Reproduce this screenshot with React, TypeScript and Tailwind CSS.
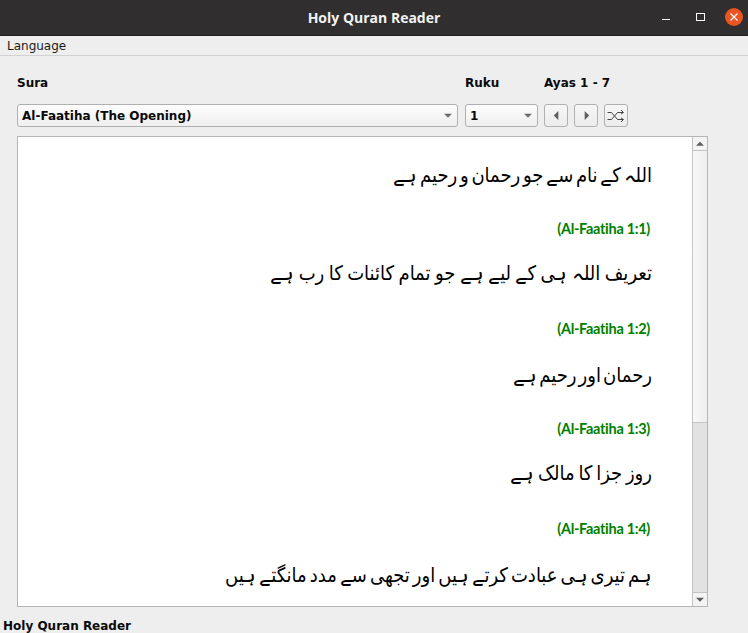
import React from "react";

const dv = "font-['DejaVu_Sans',sans-serif]";

function Arrow({ dir, size = 8, color = "#5e5e5e" }: { dir: "up" | "down" | "left" | "right"; size?: number; color?: string }) {
  const pts = { up: "0,6 10,6 5,1", down: "0,1 10,1 5,6", left: "7,0 7,10 2,5", right: "3,0 3,10 8,5" }[dir];
  return (
    <svg width={size} height={size} viewBox="0 0 10 10" className={dir === "up" || dir === "down" ? "mt-[2px]" : ""}>
      <polygon points={pts} fill={color} />
    </svg>
  );
}

function Combo({ label, className }: { label: string; className: string }) {
  return (
    <div className={`h-[23px] rounded-[3px] border border-[#b0b0b0] bg-gradient-to-b from-[#fdfdfd] to-[#efefef] flex items-center justify-between pl-[4px] pr-[5px] text-[12px] font-bold text-[#0a0a0a] ${className}`}>
      <span>{label}</span>
      <Arrow dir="down" size={8} color="#6e6e6e" />
    </div>
  );
}

function ToolBtn({ children }: { children: React.ReactNode }) {
  return (
    <div className="w-[24px] h-[23px] rounded-[3px] border border-[#b0b0b0] bg-gradient-to-b from-[#f6f6f6] to-[#ececec] flex items-center justify-center">
      {children}
    </div>
  );
}

function Verse({ text, className = "" }: { text: string; className?: string }) {
  return (
    <p dir="rtl" className={`font-['DejaVu_Sans_Condensed','DejaVu_Sans',sans-serif] font-stretch-condensed text-[20px] leading-[30px] text-black ${className}`}>
      {text}
    </p>
  );
}

function Ref({ text, className = "" }: { text: string; className?: string }) {
  return (
    <p className={`font-['Lato',sans-serif] font-bold text-[14.5px] tracking-[-0.3px] leading-[20px] text-[#008000] text-right pr-[2px] ${className}`}>
      {text}
    </p>
  );
}

export default function App() {
  return (
    <div className={`w-[748px] h-[633px] overflow-hidden bg-[#eeeeee] flex flex-col ${dv}`}>
      <div className="h-[36px] shrink-0 bg-[#302e2e] border-b border-[#1f1e1e] relative flex items-center justify-center">
        <span className="font-['Open_Sans',sans-serif] text-[14px] font-bold text-[#f2f2f2]">Holy Quran Reader</span>
        <div className="absolute right-[5px] top-[8px] flex items-center">
          <div className="w-[8px] h-[1px] bg-white mr-[26px] mt-[4px]" />
          <div className="w-[9px] h-[8px] border border-white mr-[20px]" />
          <div className="w-[18px] h-[18px] rounded-full bg-[#e95420] flex items-center justify-center">
            <svg width="10" height="10" viewBox="0 0 10 10">
              <path d="M1.5 1.5L8.5 8.5M8.5 1.5L1.5 8.5" stroke="white" strokeWidth="1.2" />
            </svg>
          </div>
        </div>
      </div>

      <div className="h-[20px] shrink-0 border-b border-[#d2d2d2] pl-[7px] pt-[1px] text-[12px] leading-[19px] text-[#1a1a1a]">
        Language
      </div>

      <div className="flex-1 flex flex-col pl-[17px] pr-[40px] min-h-0">
        <div className="h-[15px] mt-[20px] flex text-[12px] leading-[15px] font-bold text-[#0a0a0a]">
          <span className="w-[448px]">Sura</span>
          <span className="w-[79px]">Ruku</span>
          <span>Ayas 1 - 7</span>
        </div>
        <div className="mt-[13px] flex">
          <Combo label="Al-Faatiha (The Opening)" className="w-[441px]" />
          <Combo label="1" className="w-[73px] ml-[7px]" />
          <div className="ml-[6px] flex gap-[6px]">
            <ToolBtn><Arrow dir="left" size={9} /></ToolBtn>
            <ToolBtn><Arrow dir="right" size={9} /></ToolBtn>
            <ToolBtn>
              <svg width="18" height="14" viewBox="0 0 18 14" fill="none" stroke="#333" strokeWidth="0.9">
                <path d="M0.5 3.5H4.5L10.5 10.5H16M0.5 10.5H4.5L10.5 3.5H16" />
                <path d="M14 1L16.5 3.5L14 5M14 9L16.5 10.5L14 13" />
              </svg>
            </ToolBtn>
          </div>
        </div>

        <div className="mt-[9px] w-[691px] h-[471px] border border-[#b5b5b5] bg-white flex">
          <div className="flex-1 min-w-0 pr-[40px] pt-[23px]">
            <Verse text="اللہ کے نام سے جو رحمان و رحیم ہے" className="[word-spacing:-3px]" />
            <Ref text="(Al-Faatiha 1:1)" className="mt-[29px]" />
            <Verse text="تعریف اللہ ہی کے لیے ہے جو تمام کائنات کا رب ہے" className="mt-[19px] [word-spacing:-1.3px]" />
            <Ref text="(Al-Faatiha 1:2)" className="mt-[31px]" />
            <Verse text="رحمان اور رحیم ہے" className="mt-[21px] [word-spacing:-3.6px]" />
            <Ref text="(Al-Faatiha 1:3)" className="mt-[29px]" />
            <Verse text="روز جزا کا مالک ہے" className="mt-[19px] [word-spacing:-2px]" />
            <Ref text="(Al-Faatiha 1:4)" className="mt-[31px]" />
            <Verse text="ہم تیری ہی عبادت کرتے ہیں اور تجھی سے مدد مانگتے ہیں" className="mt-[21px] [word-spacing:-2.7px]" />
          </div>
          <div className="w-[15px] shrink-0 border-l border-[#c4c4c4] bg-[#e2e2e2] flex flex-col">
            <div className="h-[14px] bg-[#f3f3f3] border-b border-[#c4c4c4] flex items-center justify-center"><Arrow dir="up" size={8} /></div>
            <div className="h-[272px] bg-gradient-to-r from-[#f8f8f8] to-[#eeeeee] border-b border-[#c4c4c4]" />
            <div className="flex-1" />
            <div className="h-[14px] bg-[#f3f3f3] border-t border-[#c4c4c4] flex items-center justify-center"><Arrow dir="down" size={8} /></div>
          </div>
        </div>
      </div>

      <div className="h-[15px] shrink-0 pl-[3px] pt-[1px] text-[12px] leading-[15px] font-bold text-[#0a0a0a]">
        Holy Quran Reader
      </div>
    </div>
  );
}
